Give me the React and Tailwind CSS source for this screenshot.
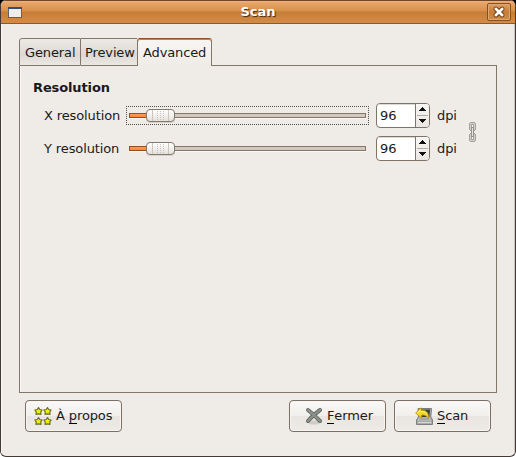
import React from "react";

function TitleBar() {
  return (
    <header className="flex h-6 shrink-0 items-center border-t border-b border-t-[#70452b] border-b-[#8b5a2c] bg-[linear-gradient(to_bottom,#efb27a_0,#e6a568_2px,#d88f4c_10px,#c77d37_11px,#d38c48_100%)] pl-[7px] pr-[4px]">
      <svg width="14" height="11" viewBox="0 0 14 11" shapeRendering="crispEdges" className="mt-px">
        <rect width="14" height="11" fill="#5b6269" />
        <rect width="14" height="2" fill="#29527f" />
        <rect x="1" y="2" width="12" height="8" fill="#eeeeec" />
      </svg>
      <h1 className="flex-1 pl-[7px] text-center text-[13px] leading-[22px] font-bold tracking-normal text-white [text-shadow:1px_1px_1px_#3d2715]">Scan</h1>
      <button className="flex h-[18px] w-6 items-center justify-center rounded-[2px] border border-[#85501f] bg-[linear-gradient(to_bottom,#dfa069,#c77d37_50%,#d18a46)] shadow-[inset_0_0_0_1px_#e0a871]" aria-label="Close">
        <svg width="12" height="12" viewBox="0 0 12 12">
          <path d="M3 3L9 9M9 3L3 9" stroke="#75451b" strokeWidth="4.8" strokeLinecap="round" />
          <path d="M3 3L9 9M9 3L3 9" stroke="#fff" strokeWidth="2.6" strokeLinecap="square" />
        </svg>
      </button>
    </header>
  );
}

function Slider({ focused }) {
  return (
    <div className={`flex h-[19px] w-[243px] items-center border px-[2px] ${focused ? "border-dotted border-[#55504b]" : "border-transparent"}`}>
      <div className="h-[5px] w-[17px] border border-r-0 border-[#94501f] bg-[linear-gradient(to_bottom,#ff9a55,#f58742)] shadow-[0_1px_0_#faf8f6]" />
      <div className="flex h-[13px] w-[29px] items-center justify-center rounded-[4px] border border-[#81786c] bg-[linear-gradient(to_bottom,#fff,#e4e1dc)] shadow-[0_1px_0_#d8d3cc]">
        <div className="flex h-[11px] w-[17px] items-center justify-center border-x border-[#cbc6be]">
          <svg width="9" height="9" viewBox="0 0 9 9" shapeRendering="crispEdges">
            {[0, 3, 6].map((x) => [0, 2, 4, 6, 8].map((y) => (
              <rect key={`${x}-${y}`} x={x + 1} y={y} width="1" height="1" fill="#c6c1ba" />
            )))}
          </svg>
        </div>
      </div>
      <div className="h-[5px] flex-1 border border-l-0 border-[#83786b] bg-[#d2c8bd] shadow-[0_1px_0_#faf8f6]" />
    </div>
  );
}

function SpinBox() {
  return (
    <div className="flex h-[25px] w-[54px] overflow-hidden rounded-[4px] border border-[#7f7467] bg-white">
      <span className="w-[39px] shrink-0 border-r border-[#7f7467] pl-[3px] leading-[23px] shadow-[inset_0_1px_0_#ddd9d4]">96</span>
      <svg width="13" height="23" viewBox="0 0 13 23" shapeRendering="crispEdges" className="bg-[linear-gradient(to_bottom,#f8f7f5,#eae6e2)]">
        <path d="M6 3h1v1h1v1h1v1h1v1H3V6h1V5h1V4h1z" fill="#111" />
        <path d="M1 11h11v1H1z" fill="#b3aca3" />
        <path d="M3 15h7v1H9v1H8v1H7v1H6v-1H5v-1H4v-1H3z" fill="#111" />
      </svg>
    </div>
  );
}

function ResolutionRow({ label, focused }) {
  return (
    <div className="flex h-[25px] items-center">
      <label className="w-[82px] whitespace-nowrap">{label}</label>
      <Slider focused={focused} />
      <div className="w-[7px]" />
      <SpinBox />
      <span className="w-5 pl-[7px]">dpi</span>
    </div>
  );
}

function ChainIcon() {
  return (
    <svg width="7" height="20" viewBox="0 0 7 20" fill="none" shapeRendering="crispEdges">
      <path d="M1.5 .5h4l1 1v6l-1 1h-4l-1-1v-6zM1.5 11.5h4l1 1v6l-1 1h-4l-1-1v-6z" fill="#d0cdc9" stroke="#a6a29d" />
      <path d="M2.5 2.5h2v4h-2zM2.5 13.5h2v4h-2z" fill="#efebe7" stroke="#aaa6a1" />
      <path d="M2 5h3v10H2z" fill="#96928d" />
      <path d="M3 6h1v8H3z" fill="#e6e3df" />
    </svg>
  );
}

function StarsIcon() {
  return (
    <svg width="18" height="18" viewBox="0 0 18 18">
      {[[0, 0], [9, 0], [0, 10], [9, 10]].map(([x, y]) => (
        <path key={`${x}-${y}`} transform={`translate(${x} ${y})`} d="M4.5 .6L5.8 2.5 8.1 3 6.8 4.9 7 7.3 4.5 6.8 2 7.3 2.2 4.9 .9 3 3.2 2.5z" fill="#eef000" stroke="#6c6c32" strokeWidth="1.2" strokeLinejoin="round" />
      ))}
    </svg>
  );
}

function CloseIcon() {
  return (
    <svg width="18" height="18" viewBox="0 0 18 18">
      <ellipse cx="9" cy="15.5" rx="6" ry="2" fill="#d0cdc9" />
      <path d="M3 3Q8 7 15 14M15 3Q8 8 3 14" fill="none" stroke="#5f6660" strokeWidth="4" strokeLinecap="round" />
      <path d="M3 3Q8 7 15 14M15 3Q8 8 3 14" fill="none" stroke="#8a908a" strokeWidth="2.3" strokeLinecap="round" />
    </svg>
  );
}

function ScannerIcon() {
  return (
    <svg width="19" height="19" viewBox="0 0 19 19">
      <path d="M3 1.5h13.5l-.7 8.5 1.7 3v4.5h-16V13L3.5 10z" fill="#a9aaa9" stroke="#7d7f7d" strokeLinejoin="round" />
      <path d="M5 2.5h10L14.3 10H5z" fill="#3b3d3b" />
      <path d="M4.3 10.5h10.4l1.6 3H2.7z" fill="#bfc0bf" />
      <path d="M5 11.5h9l.5 1H4.5z" fill="#8d8f8d" />
      <path d="M3 15h13v1H3z" fill="#d5d6d5" />
      <path d="M.6 6L6 .8v2.5C10.5 2.5 14 5.5 13.6 11.5 11.6 8.7 9.5 7.6 6.5 8.1v3z" fill="#f3d62c" stroke="#bd980c" strokeWidth=".9" strokeLinejoin="round" />
      <path d="M2.5 6L5.3 3.3V4.6C8.5 4 10.7 5 12 7" fill="none" stroke="#fff18a" />
    </svg>
  );
}

function ActionButton({ icon, children, className }) {
  return (
    <button className={`flex h-8 w-[97px] items-center whitespace-nowrap rounded-[4px] border border-[#7b7062] bg-[linear-gradient(to_bottom,#faf9f8_0,#f1efec_50%,#e9e5e1_51%,#eeebe7_100%)] shadow-[inset_0_0_0_1px_#f8f6f4] ${className}`}>
      {icon}
      <span className="pb-px">{children}</span>
    </button>
  );
}

function Key({ children }) {
  return <span className="inline-block h-[16px] border-b border-black leading-[15px]">{children}</span>;
}

export default function App() {
  return (
    <div className="h-[457px] w-[516px] bg-[linear-gradient(to_bottom,#000_0_50%,#fff_50%)] font-['DejaVu_Sans',sans-serif] text-[13px] leading-4 tracking-[-0.12px] text-[#1a1a1a]">
      <main className="flex h-full flex-col overflow-hidden rounded-[6px] border border-t-0 border-[#443a35] bg-[#efebe7]">
        <TitleBar />
        <div className="flex flex-1 flex-col border-l border-r border-l-[#f9f7f5] border-r-[#ccc5be] pt-[14px] pr-[17px] pl-[17px]">
          <nav className="flex h-[28px] items-end">
            <div className="h-[28px] w-[62px] rounded-tl-[3px] border border-[#81786c] bg-[linear-gradient(to_bottom,#edeae6,#ddd8d3_60%,#ebe7e3)] pt-[6px] pl-[5px]">General</div>
            <div className="h-[28px] w-[56px] border-t border-b border-[#81786c] bg-[linear-gradient(to_bottom,#edeae6,#ddd8d3_60%,#ebe7e3)] pt-[6px] pl-[4px]">Preview</div>
            <div className="h-[28px] w-[75px] rounded-t-[3px] border border-b-0 border-[#81786c] border-t-[#984f24] bg-[linear-gradient(to_bottom,#f8f6f4,#efebe7)] pt-[6px] pl-[5px] shadow-[inset_0_1px_0_#e9752f]">Advanced</div>
            <div className="h-px flex-1 bg-[#81786c]" />
          </nav>
          <section className="h-[327px] border border-t-0 border-[#81786c] pt-[14px] pl-[13px] shadow-[inset_1px_0_0_#faf8f6]">
            <h2 className="font-bold">Resolution</h2>
            <div className="flex items-center pt-[7px] pl-[11px]">
              <div className="flex flex-col gap-2">
                <ResolutionRow label="X resolution" focused />
                <ResolutionRow label="Y resolution" />
              </div>
              <div className="pl-[19px]"><ChainIcon /></div>
            </div>
          </section>
          <footer className="flex pt-[7px] pl-[6px]">
            <ActionButton icon={<StarsIcon />} className="gap-[4px] pl-[8px]">À <Key>p</Key>ropos</ActionButton>
            <ActionButton icon={<CloseIcon />} className="ml-[167px] gap-[4px] pl-[15px]"><Key>F</Key>ermer</ActionButton>
            <ActionButton icon={<ScannerIcon />} className="ml-[8px] gap-[3px] pl-[20px]"><Key>S</Key>can</ActionButton>
          </footer>
        </div>
      </main>
    </div>
  );
}
